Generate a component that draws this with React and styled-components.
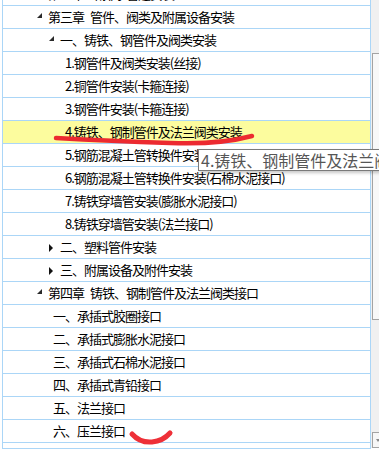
import React from "react";
import styled, { createGlobalStyle } from "styled-components";

const GlobalStyle = createGlobalStyle`
  html, body {
    margin: 0;
    padding: 0;
    background: #fff;
    overflow: hidden;
  }
  body {
    font-family: "Noto Sans CJK SC", "Noto Sans", sans-serif;
  }
`;

const Frame = styled.div`
  position: relative;
  width: 379px;
  height: 452px;
  overflow: hidden;
  display: flex;
  align-items: flex-start;
  padding-left: 2px;
  box-sizing: border-box;
`;

const Tree = styled.div`
  flex-shrink: 0;
  width: 369px;
  height: 449px;
  box-sizing: border-box;
  border-left: 1px solid #abd6f7;
  border-right: 1px solid #abd6f7;
  border-bottom: 1px solid #abd6f7;
  overflow: hidden;
`;

const List = styled.ul`
  list-style: none;
  margin: -17px 0 0 0;
  padding: 0;
`;

const Row = styled.li`
  display: flex;
  align-items: center;
  height: 23px;
  box-sizing: border-box;
  border-bottom: 1px solid #abd6f7;
  padding-left: ${(p) => p.$indent}px;
  background: ${(p) => (p.$selected ? "#fcfc9e" : "#fff")};
  color: #000;
  font-size: 13px;
  letter-spacing: -1px;
  word-spacing: 4px;
  white-space: nowrap;
  line-height: 22px;
`;

const Expander = styled.span`
  flex-shrink: 0;
  width: 11px;
  height: 22px;
  display: flex;
  align-items: center;
`;

const OpenArrow = styled.span`
  width: 0;
  height: 0;
  border-left: 5px solid transparent;
  border-bottom: 5px solid #2a2a2a;
  margin-top: -3px;
`;

const ClosedArrow = styled.span`
  width: 0;
  height: 0;
  border-top: 4px solid transparent;
  border-bottom: 4px solid transparent;
  border-left: 4px solid #111;
  margin-top: 2px;
`;

const Label = styled.span`
  display: block;
`;

const Scrollbar = styled.div`
  flex-shrink: 0;
  width: 17px;
  height: 448px;
  box-sizing: border-box;
  background: #f0f0f0;
  display: flex;
  flex-direction: column;
  padding: 53px 0 0 1px;
`;

const Thumb = styled.div`
  width: 15px;
  height: 267px;
  box-sizing: border-box;
  border: 1px solid #a3a3a3;
  background: #f8f8f8;
`;

const Spacer = styled.div`
  flex: 1;
`;

const DownButton = styled.div`
  width: 15px;
  height: 16px;
  box-sizing: border-box;
  border: 1px solid #a3a3a3;
  background: #f7f7f7;
  display: flex;
  align-items: center;
  padding-left: 3px;
`;

const SmallArrow = styled.span`
  width: 0;
  height: 0;
  border-left: 2px solid transparent;
  border-right: 2px solid transparent;
  border-top: 3px solid #8a8a8a;
`;

const Tooltip = styled.div`
  position: absolute;
  left: 198px;
  top: 149px;
  width: 240px;
  height: 22px;
  box-sizing: border-box;
  border: 1px solid #7a7a7a;
  background: #fff;
  box-shadow: 2px 2px 3px rgba(0, 0, 0, 0.22);
  padding-left: 2px;
  color: #565656;
  font-size: 16px;
  letter-spacing: 0;
  line-height: 20px;
  white-space: nowrap;
  z-index: 2;
`;

const Marks = styled.svg`
  position: absolute;
  left: 0;
  top: 0;
  pointer-events: none;
  z-index: 1;
`;

const rows = [
  { indent: 34, node: "closed", text: "第二章 给排水管道安装" },
  { indent: 34, node: "open", text: "第三章 管件、阀类及附属设备安装" },
  { indent: 46, node: "open", text: "一、铸铁、钢管件及阀类安装" },
  { indent: 62, text: "1.钢管件及阀类安装(丝接)" },
  { indent: 62, text: "2.铜管件安装(卡箍连接)" },
  { indent: 62, text: "3.钢管件安装(卡箍连接)" },
  { indent: 62, text: "4.铸铁、钢制管件及法兰阀类安装", selected: true },
  { indent: 62, text: "5.钢筋混凝土管转换件安装(膨胀水泥接口)" },
  { indent: 62, text: "6.钢筋混凝土管转换件安装(石棉水泥接口)" },
  { indent: 62, text: "7.铸铁穿墙管安装(膨胀水泥接口)" },
  { indent: 62, text: "8.铸铁穿墙管安装(法兰接口)" },
  { indent: 46, node: "closed", text: "二、塑料管件安装" },
  { indent: 46, node: "closed", text: "三、附属设备及附件安装" },
  { indent: 34, node: "open", text: "第四章 铸铁、钢制管件及法兰阀类接口" },
  { indent: 50, text: "一、承插式胶圈接口" },
  { indent: 50, text: "二、承插式膨胀水泥接口" },
  { indent: 50, text: "三、承插式石棉水泥接口" },
  { indent: 50, text: "四、承插式青铅接口" },
  { indent: 50, text: "五、法兰接口" },
  { indent: 50, text: "六、压兰接口" },
];

export default function App() {
  return (
    <>
      <GlobalStyle />
      <Frame>
        <Tree>
          <List>
            {rows.map((r, i) => (
              <Row key={i} $indent={r.indent} $selected={r.selected}>
                {r.node && (
                  <Expander>
                    {r.node === "open" ? <OpenArrow /> : <ClosedArrow />}
                  </Expander>
                )}
                <Label>{r.text}</Label>
              </Row>
            ))}
          </List>
        </Tree>
        <Scrollbar>
          <Thumb />
          <Spacer />
          <DownButton>
            <SmallArrow />
          </DownButton>
        </Scrollbar>
        <Marks width="379" height="452" viewBox="0 0 379 452">
          <path
            d="M56 138 Q 110 141 170 143 Q 218 145 252 136"
            fill="none"
            stroke="#ec2a30"
            strokeWidth="4.5"
            strokeLinecap="round"
          />
          <path
            d="M132 434 Q 140 443 152 442 Q 163 441 170 433"
            fill="none"
            stroke="#ee3038"
            strokeWidth="5"
            strokeLinecap="round"
          />
        </Marks>
        <Tooltip>4.铸铁、钢制管件及法兰阀类安装</Tooltip>
      </Frame>
    </>
  );
}
